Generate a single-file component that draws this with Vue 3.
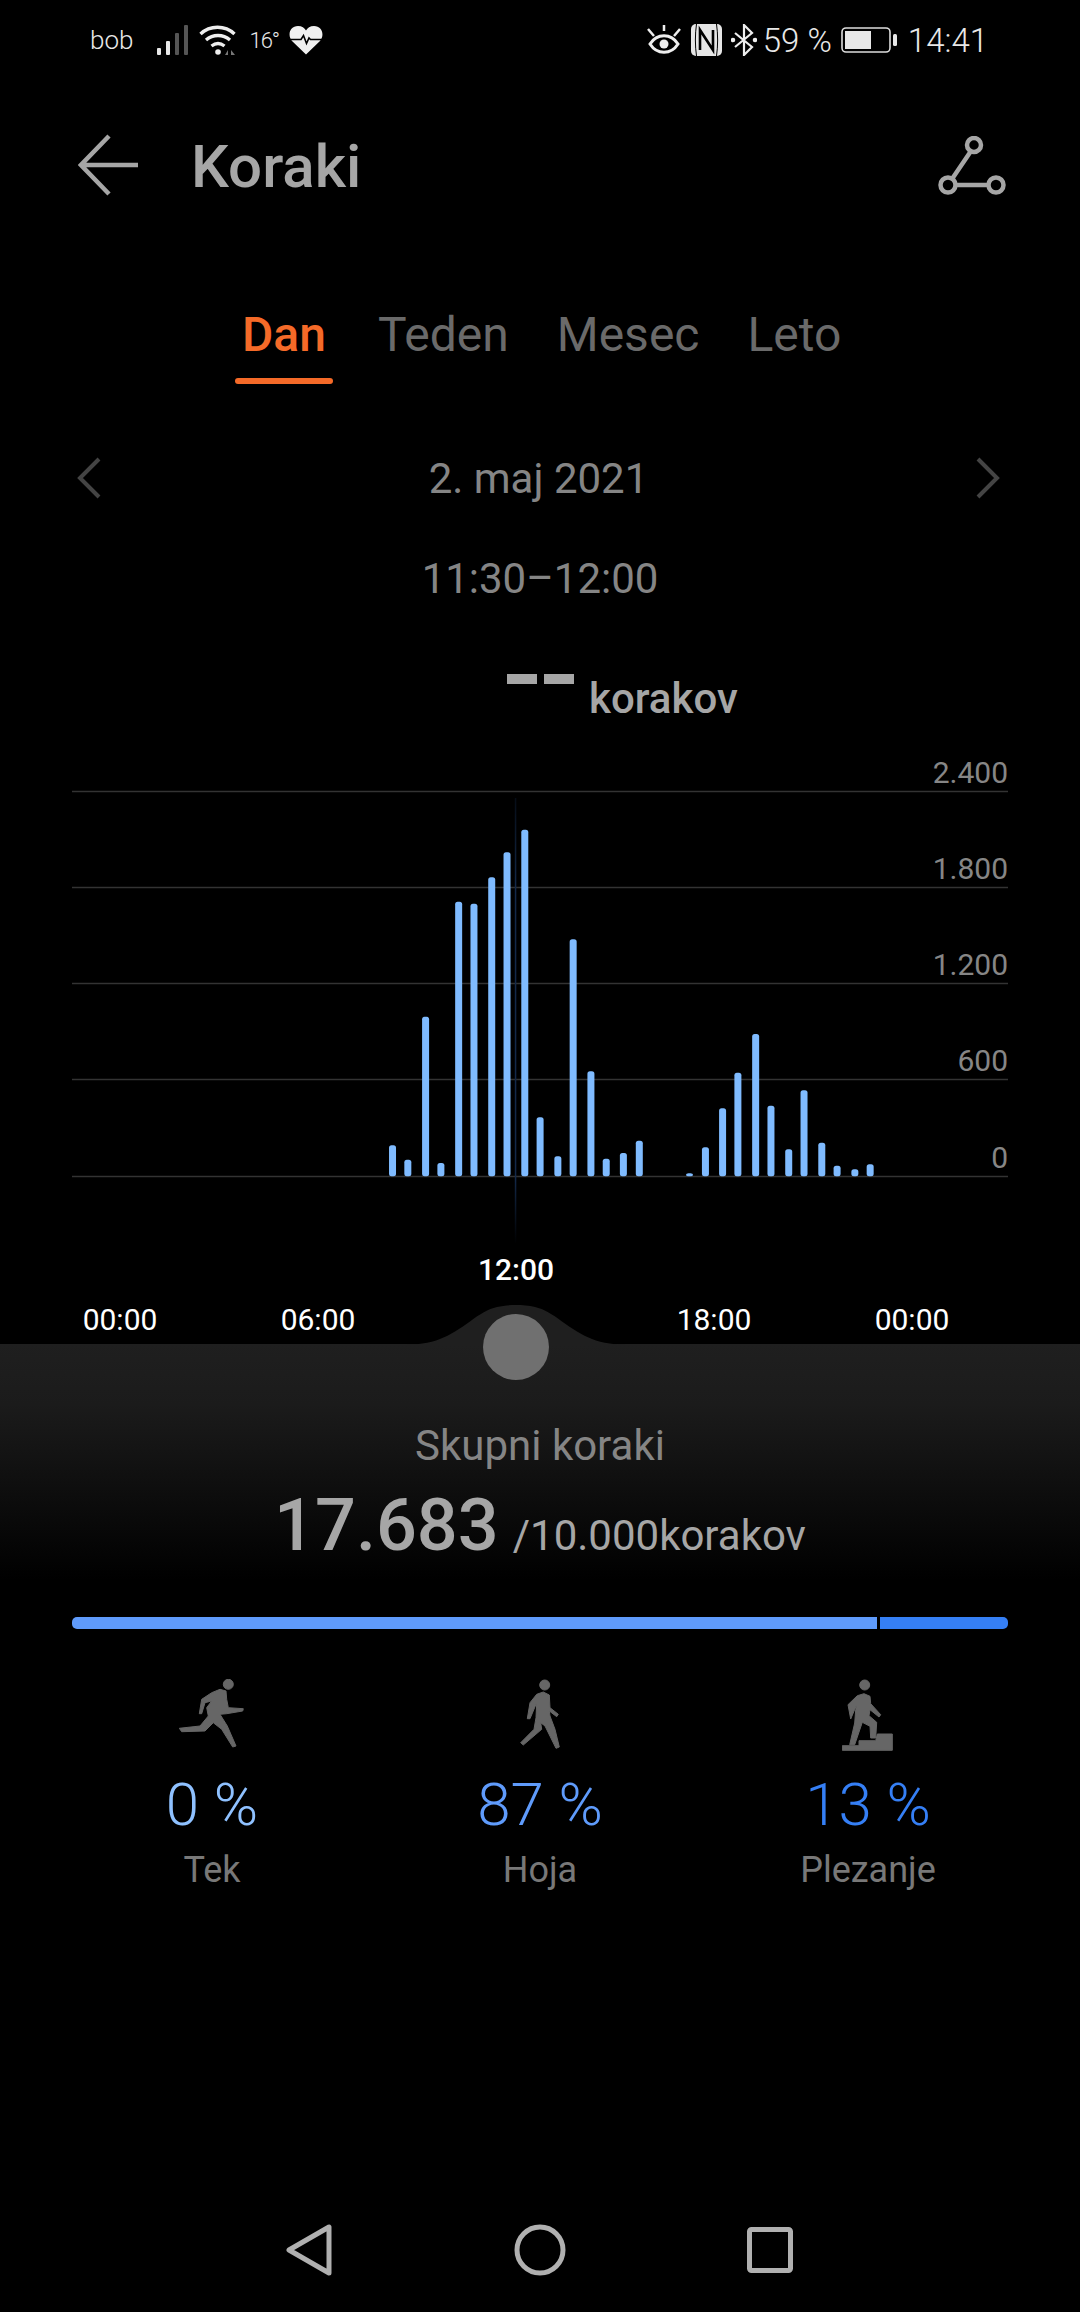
<script setup>
const raw = [[543,1156],[568,1199],[597,770],[622,1209],[651,425],[676,431],[705,352],[730,277],[759,209],[784,1072],[813,1189],[838,538],[867,934],[892,1196],[920,1179],[946,1142],[1028,1240],[1054,1162],[1082,1045],[1107,938],[1136,822],[1161,1037],[1190,1168],[1215,991],[1244,1148],[1269,1217],[1298,1228],[1323,1213]]
const bars = raw.map(([x, t]) => ({ x: 60 + x / 1.633 - 3.5, y: 24 + t / 3, h: (1249 - t) / 3 }))
const grid = [
  { y: 55.5, label: '2.400' },
  { y: 151.5, label: '1.800' },
  { y: 247.5, label: '1.200' },
  { y: 343.5, label: '600' },
  { y: 440.5, label: '0' }
]
const tabs = ['Dan', 'Teden', 'Mesec', 'Leto']
</script>

<template>
  <div class="page">
    <div class="status">
      <span class="carrier">bob</span>
      <svg class="sig" width="32" height="30" viewBox="0 0 32 30">
        <rect x="0" y="23" width="4" height="7" rx="1" fill="#e8e8e8"/>
        <rect x="9" y="16" width="4" height="14" rx="1" fill="#e8e8e8"/>
        <rect x="18" y="8" width="4" height="22" rx="1" fill="#555"/>
        <rect x="27" y="0" width="4" height="30" rx="1" fill="#555"/>
      </svg>
      <svg class="wifi" width="38" height="32" viewBox="0 0 38 32" fill="none" stroke="#eee" stroke-width="3.4">
        <path d="M1.500 10C11 1 26 1 35.500 10"/>
        <path d="M7 16c7-6 17-6 24 0"/>
        <path d="M12.500 22c4-3 9-3 13 0"/>
        <circle cx="19" cy="28" r="2.800" fill="#eee" stroke="none"/>
        <path d="M26 31l3-5v5zM32 26l4 5h-4z" fill="#777" stroke="none"/>
      </svg>
      <span class="temp">16°</span>
      <svg class="heart" width="34" height="30" viewBox="0 0 34 30">
        <path d="M17 29.500 3 16C-2 10 1 1 9 1c4 0 6.500 2 8 4.500C18.500 3 21 1 25 1c8 0 11 9 6 15z" fill="#f0f0f0"/>
        <path d="M0 14.500h12l2.500-4 3 8 2.500-5.500 1.500 1.500h12" fill="none" stroke="#000" stroke-width="1.600"/>
      </svg>
      <span class="spacer"></span>
      <svg class="eye" width="34" height="31" viewBox="0 0 34 31" fill="none" stroke="#eee" stroke-width="3">
        <path d="M3 19c7-11 21-11 28 0-7 11-21 11-28 0z"/>
        <circle cx="17" cy="19" r="4.500" fill="#eee" stroke="none"/>
        <path d="M1 4l6 7M17 0v6M33 4l-6 7" stroke-width="2.500"/>
      </svg>
      <svg class="nfc" width="31" height="32" viewBox="0 0 31 32">
        <rect width="31" height="32" rx="5" fill="#e6e6e6"/>
        <path d="M9 26V6l13 20V6" fill="none" stroke="#000" stroke-width="2.600"/>
        <path d="M5.500 0C4 10 4 22 5.500 32M25.500 0C27 10 27 22 25.500 32" fill="none" stroke="#000" stroke-width="1"/>
      </svg>
      <svg class="bt" width="26" height="32" viewBox="0 0 26 32" fill="none" stroke="#eee" stroke-width="2.200">
        <path d="M4 9l17 14-8 8V1l8 8L4 23"/>
        <circle cx="2" cy="16" r="1.200" fill="#eee"/>
        <circle cx="24" cy="16" r="1.200" fill="#eee"/>
      </svg>
      <span class="batt-txt">59 %</span>
      <svg class="batt" width="56" height="26" viewBox="0 0 56 26">
        <rect x="1" y="1" width="48" height="24" rx="4" fill="none" stroke="#ddd" stroke-width="1.600"/>
        <rect x="4" y="4" width="26" height="18" fill="#e8e8e8"/>
        <rect x="52" y="7" width="4" height="12" rx="1.500" fill="#e8e8e8"/>
      </svg>
      <span class="clock">14:41</span>
    </div>

    <div class="header">
      <svg class="back" width="62" height="62" viewBox="0 0 62 62" fill="none" stroke="#a6a6a6" stroke-width="4.500">
        <path d="M31 2 3 31l28 29M3 31h57"/>
      </svg>
      <span class="title">Koraki</span>
      <svg class="route" width="68" height="62" viewBox="0 0 68 62" fill="none" stroke="#a6a6a6" stroke-width="4.500">
        <circle cx="36" cy="9" r="7"/>
        <circle cx="10" cy="49" r="7.500"/>
        <circle cx="58" cy="49" r="7.500"/>
        <path d="M33 15 14 43M17.500 49h33"/>
      </svg>
    </div>

    <div class="tabs">
      <div v-for="(t, i) in tabs" :key="t" class="tab" :class="{ active: i === 0 }">{{ t }}</div>
    </div>

    <div class="date">
      <svg width="24" height="42" viewBox="0 0 24 42" fill="none" stroke="#444" stroke-width="4"><path d="M22 2 3 21l19 19"/></svg>
      <span>2. maj 2021</span>
      <svg width="24" height="42" viewBox="0 0 24 42" fill="none" stroke="#444" stroke-width="4"><path d="M2 2l19 19L2 40"/></svg>
    </div>
    <div class="range">11:30–12:00</div>

    <div class="reading">
      <i></i><i></i>
      <span>korakov</span>
    </div>

    <svg class="chart" width="1080" height="508" viewBox="0 0 1080 508">
      <defs>
        <linearGradient id="cursor" gradientUnits="userSpaceOnUse" x1="0" x2="0" y1="62" y2="508">
          <stop offset="0" stop-color="#13294a" stop-opacity="0.3"/>
          <stop offset="0.2" stop-color="#13294a"/>
          <stop offset="0.85" stop-color="#13294a"/>
          <stop offset="1" stop-color="#13294a" stop-opacity="0"/>
        </linearGradient>
      </defs>
      <g v-for="g in grid" :key="g.label">
        <line x1="72" x2="1008" :y1="g.y" :y2="g.y" stroke="#333" stroke-width="1.500"/>
        <text x="1008" :y="g.y - 9" text-anchor="end" class="axis">{{ g.label }}</text>
      </g>
      <rect x="514.800" y="62" width="1.500" height="446" fill="url(#cursor)"/>
      <rect v-for="b in bars" :key="b.x" :x="b.x" :y="b.y" width="7" :height="b.h" rx="2.500" fill="#7fbbff"/>
    </svg>

    <div class="ticks">
      <span class="noon">12:00</span>
      <span class="t1">00:00</span>
      <span class="t2">06:00</span>
      <span class="t4">18:00</span>
      <span class="t5">00:00</span>
    </div>

    <div class="panel">
      <svg class="hump" width="232" height="41" viewBox="0 0 232 41">
        <path d="M0 41C16 41 30 39 40 35 50 31 60 25 70 17.500 80 10 88 5 97 3 103 1.500 110 1 116 1s13 .5 19 2c9 2 17 7 27 14.500 10 7.500 20 13.500 30 17.500 10 4 24 6 40 6z" fill="#1f1f1f"/>
      </svg>
      <div class="knob"></div>
      <div class="total-label">Skupni koraki</div>
      <div class="total"><b>17.683</b><span>/10.000korakov</span></div>
      <div class="progress"><div class="p1"></div><div class="p2"></div></div>
    </div>

    <div class="stats">
      <div class="stat">
        <svg class="fig" width="66" height="72" viewBox="-1 0 66 72">
          <circle cx="48.300" cy="5.300" r="5"/>
          <path d="M19.300 34.700 21.700 20.300 31.700 13.700 40 10.300 46 12 46.700 20.300 48.300 28.700 63.300 29.700 62.700 32 46.700 34.700 40 35.300 47.300 47 56 67 52.700 68 41.700 50.300 33.300 43.700 25 52 1.700 52.700-.7 49.300 20 47 28.300 37 26.700 28.700 31.700 22 25 23.700 21.700 34.700z"/>
        </svg>
        <div class="pct p0">0 %</div>
        <div class="lbl">Tek</div>
      </div>
      <div class="stat">
        <svg class="fig" width="40" height="72" viewBox="-2 0 40 72">
          <circle cx="22.700" cy="6" r="5"/>
          <path d="M5.300 39.700 8 23.700 14.700 15.300 21.300 13 27.300 16 28 28.700 36.300 35.300 34.700 37.700 27.300 32 28 37 33 50.300 37.300 68 34 69.300 23 47 18.700 43.700 19.700 50.300 1.300 66-1.300 63.700 12 50.300 14 38.700 14.700 23.700 8 39.700z"/>
        </svg>
        <div class="pct p87">87 %</div>
        <div class="lbl">Hoja</div>
      </div>
      <div class="stat">
        <svg class="fig" width="52" height="72" viewBox="0 0 52 72">
          <circle cx="22.700" cy="6" r="5"/>
          <path d="M8.700 40 6 25.700 15.300 16.700 22 14.700 28 17.300 28.700 24.700 38.700 35.700 37 38 28 30.700 27 36.700 34.700 43.300 33.700 59 28.700 59 28 47.300 20.300 43.300 12.700 65.700 7.700 65.700 12.700 44 13.700 30.700 14.700 25.700z"/>
          <path d="M.3 71.300V66.700H17V61.700H33.700L35.300 55H50.300V71.300z"/>
        </svg>
        <div class="pct p13">13 %</div>
        <div class="lbl">Plezanje</div>
      </div>
    </div>

    <div class="nav">
      <svg width="46" height="54" viewBox="0 0 46 54" fill="none" stroke="#b0b0b0" stroke-width="5" stroke-linejoin="round"><path d="M43 4v46L3 27z"/></svg>
      <svg width="54" height="54" viewBox="0 0 54 54" fill="none" stroke="#b0b0b0" stroke-width="5"><circle cx="27" cy="27" r="23"/></svg>
      <svg class="sq" width="46" height="46" viewBox="0 0 46 46" fill="none" stroke="#b0b0b0" stroke-width="5" stroke-linejoin="round"><rect x="2.500" y="2.500" width="41" height="41" rx="2"/></svg>
    </div>
  </div>
</template>

<style>
html, body { margin: 0; background: #000; }
</style>

<style scoped>
.page {
  width: 1080px;
  height: 2312px;
  background: #000;
  display: flex;
  flex-direction: column;
  font-family: Roboto, "Liberation Sans", sans-serif;
  overflow: hidden;
  color: #8a8a8a;
}
.status {
  height: 80px;
  padding: 0 92px 0 90px;
  display: flex;
  align-items: center;
  box-sizing: border-box;
  color: #e8e8e8;
  font-weight: 300;
}
.carrier { font-size: 26px; margin-right: 24px; }
.sig { margin-right: 10px; }
.wifi { margin-right: 12px; }
.temp { font-size: 22px; margin-right: 6px; letter-spacing: -1px; }
.heart { margin-left: 4px; }
.spacer { flex: 1; }
.eye { margin-right: 10px; }
.nfc { margin-right: 9px; }
.bt { margin-right: 6px; }
.batt-txt { font-size: 33px; margin-right: 9px; }
.batt { margin-right: 11px; }
.clock { font-size: 33px; }

.header {
  height: 170px;
  padding: 0 74px 0 78px;
  box-sizing: border-box;
  display: flex;
  align-items: center;
}
.back { margin-right: 51px; }
.title { font-size: 60px; font-weight: 500; color: #a6a6a6; flex: 1; position: relative; top: 1px; }
.route { margin-top: 4px; }

.tabs {
  height: 134px;
  padding: 50px 0 0 235px;
  box-sizing: border-box;
  display: flex;
  align-items: flex-start;
  gap: 34px;
}
.tab {
  position: relative;
  font-size: 48px;
  line-height: 70px;
  color: #6a6a6a;
  padding: 0 7px;
}
.tab.active { color: #f56a28; font-weight: 500; margin-right: 4px; }
.tab.active::after {
  content: "";
  position: absolute;
  left: 0;
  right: 0;
  bottom: -14px;
  height: 6px;
  border-radius: 3px;
  background: #f56a28;
}

.date {
  margin-top: 64px;
  height: 60px;
  padding: 0 80px 0 77px;
  display: flex;
  align-items: center;
  justify-content: space-between;
  font-size: 42px;
  color: #858585;
}
.range {
  margin-top: 41px;
  height: 60px;
  line-height: 60px;
  text-align: center;
  font-size: 42px;
  color: #858585;
}
.reading {
  height: 127px;
  box-sizing: border-box;
  padding-left: 507px;
  display: flex;
  align-items: flex-start;
}
.reading i {
  width: 30px;
  height: 10px;
  margin-top: 65px;
  margin-right: 7px;
  background: #a6a6a6;
}
.reading span {
  margin: 66px 0 0 8px;
  font-size: 42px;
  line-height: 48px;
  font-weight: 500;
  color: #a6a6a6;
}
.chart { display: block; flex: none; }
.axis { font-size: 30px; fill: #868686; font-family: Roboto, sans-serif; }

.ticks {
  height: 100px;
  padding-left: 21px;
  display: grid;
  grid-template-columns: repeat(5, 198px);
  grid-template-rows: 50px 50px;
  justify-items: center;
  align-items: center;
  font-size: 30px;
  color: #fff;
}
.noon { grid-row: 1; grid-column: 3; font-weight: 500; }
.t1 { grid-row: 2; grid-column: 1; }
.t2 { grid-row: 2; grid-column: 2; }
.t4 { grid-row: 2; grid-column: 4; }
.t5 { grid-row: 2; grid-column: 5; }

.panel {
  position: relative;
  height: 297px;
  flex: none;
  background: linear-gradient(#1f1f1f 0, #1b1b1b 60px, #000 236px);
  padding: 0 72px;
  box-sizing: border-box;
  display: flex;
  flex-direction: column;
  align-items: center;
}
.hump { position: absolute; left: 400px; top: -40px; }
.knob {
  position: absolute;
  left: 483px;
  top: -30px;
  width: 66px;
  height: 66px;
  border-radius: 50%;
  background: #707070;
}
.total-label {
  margin-top: 74px;
  height: 56px;
  line-height: 56px;
  font-size: 42px;
  color: #858585;
}
.total {
  margin-top: 10px;
  height: 84px;
  line-height: 84px;
  white-space: pre;
}
.total b { font-size: 72px; font-weight: 500; color: #a6a6a6; }
.total span { font-size: 42px; margin-left: 14px; color: #a6a6a6; }
.progress {
  margin-top: 49px;
  width: 936px;
  height: 12px;
  display: flex;
  gap: 3px;
  border-radius: 5px;
  overflow: hidden;
  flex: none;
}
.p1 { flex: 805; background: #5f9bfb; }
.p2 { flex: 128; background: #357ff5; }

.stats {
  margin-top: 38px;
  padding: 0 48px;
  display: grid;
  grid-template-columns: repeat(3, 328px);
  justify-items: center;
}
.stat { display: flex; flex-direction: column; align-items: center; }
.fig { display: block; fill: #666; stroke: #666; stroke-width: 1; stroke-linejoin: round; }
.pct { margin-top: 19px; font-size: 60px; line-height: 70px; font-weight: 300; }
.p0 { color: #8fc1ff; }
.p87 { color: #5f9bfb; }
.p13 { color: #357ff5; }
.lbl { margin-top: 5px; font-size: 36px; line-height: 50px; color: #787878; }

.nav {
  margin-top: auto;
  height: 89px;
  display: grid;
  grid-template-columns: repeat(3, 231px);
  grid-template-rows: 54px;
  justify-content: center;
  justify-items: center;
  align-items: center;
}
.sq { margin-right: 3px; }
</style>
